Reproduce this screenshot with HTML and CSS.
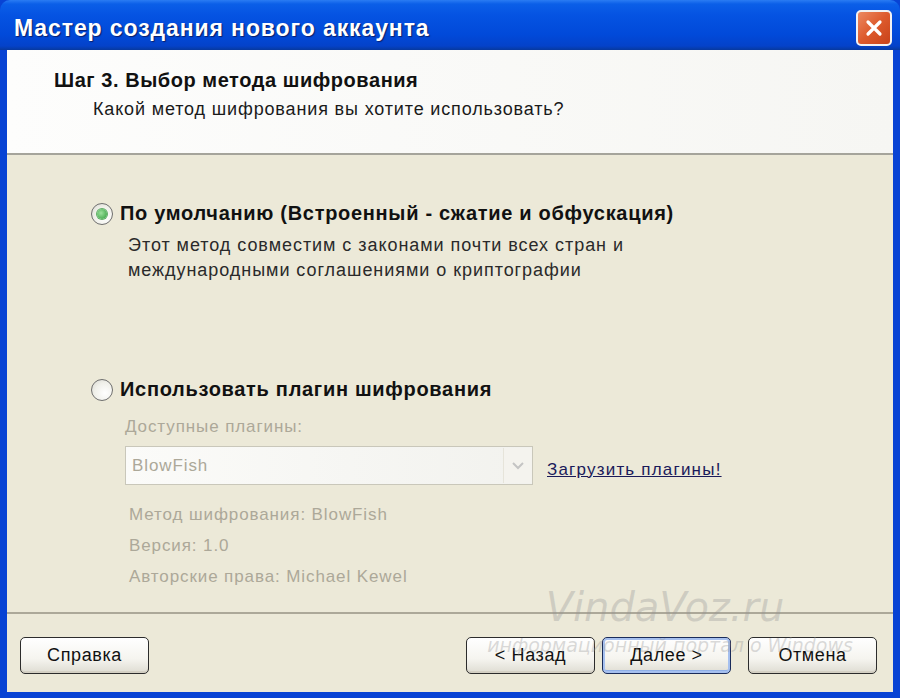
FILE: index.html
```html
<!DOCTYPE html>
<html lang="ru">
<head>
    <meta charset="UTF-8">
    <meta name="viewport" content="width=device-width, initial-scale=1.0">
    <link rel="stylesheet" href="styles.css">
    <title>Мастер создания нового аккаунта</title>
</head>
<body>
    <div class="window">
        <div class="titlebar">
            <span class="title">Мастер создания нового аккаунта</span>
            <button class="close-btn" aria-label="Закрыть">
                <svg width="22" height="22" viewBox="0 0 22 22">
                    <path d="M5 5 L17 17 M17 5 L5 17" stroke="#fff" stroke-width="3.2" stroke-linecap="round"/>
                </svg>
            </button>
        </div>

        <div class="frame">
            <!-- Step header -->
            <div class="header">
                <div class="step-title">Шаг 3. Выбор метода шифрования</div>
                <div class="step-subtitle">Какой метод шифрования вы хотите использовать?</div>
            </div>

            <div class="body">
                <label class="option">
                    <span class="radio checked"><span class="dot"></span></span>
                    <span class="option-label">По умолчанию (Встроенный - сжатие и обфускация)</span>
                </label>
                <div class="option-desc">
                    Этот метод совместим с законами почти всех стран и<br>
                    международными соглашениями о криптографии
                </div>

                <label class="option option-plugin">
                    <span class="radio"></span>
                    <span class="option-label">Использовать плагин шифрования</span>
                </label>

                <div class="plugin-box">
                    <div class="muted">Доступные плагины:</div>
                    <div class="combo-row">
                        <div class="combo">
                            <span class="combo-value">BlowFish</span>
                            <span class="combo-arrow">
                                <svg width="14" height="10" viewBox="0 0 14 10">
                                    <path d="M2 2 L7 7 L12 2" fill="none" stroke="#c4c4c4" stroke-width="2"/>
                                </svg>
                            </span>
                        </div>
                        <a class="link" href="#">Загрузить плагины!</a>
                    </div>
                    <div class="plugin-info">
                        <div class="muted">Метод шифрования: BlowFish</div>
                        <div class="muted">Версия: 1.0</div>
                        <div class="muted">Авторские права: Michael Kewel</div>
                    </div>
                </div>
            </div>

            <div class="footer">
                <button class="btn">Справка</button>
                <div class="nav-buttons">
                    <button class="btn">&lt; Назад</button>
                    <button class="btn btn-default">Далее &gt;</button>
                    <button class="btn btn-cancel">Отмена</button>
                </div>
            </div>
        </div>

        <!-- watermark of the source picture -->
        <div class="watermark">
            <span class="wm-site">VindaVoz.ru</span>
            <span class="wm-text">информационный портал о Windows</span>
        </div>
    </div>
</body>
</html>
```

FILE: styles.css
```css
body {
    margin: 0;
    padding: 0;
    font-family: "Liberation Sans", Arial, sans-serif;
    background-color: #0a49d8;
}

.window {
    position: relative;
    width: 900px;
    height: 698px;
    display: flex;
    flex-direction: column;
    background-color: #0843d4;
    overflow: hidden;
}

/* Title bar */
.titlebar {
    height: 50px;
    flex-shrink: 0;
    display: flex;
    align-items: center;
    justify-content: space-between;
    padding: 0 8px 0 14px;
    background: linear-gradient(to bottom, #2a7cf3 0%, #0b5fe8 8%, #0553e2 30%, #0149d9 70%, #0442c9 92%, #07399f 100%);
    border-radius: 10px 10px 0 0;
}

.title {
    color: #fff;
    font-weight: bold;
    font-size: 23px;
    letter-spacing: 0.9px;
    text-shadow: 1px 1px 1px #0a1f6b;
    margin-top: 6px;
}

.close-btn {
    width: 36px;
    height: 36px;
    margin-top: 6px;
    padding: 0;
    display: flex;
    align-items: center;
    justify-content: center;
    border: 2px solid #f2f2f2;
    border-radius: 5px;
    background: linear-gradient(135deg, #ec8a62 0%, #dd5a2c 50%, #c8421a 100%);
    cursor: pointer;
}

/* Dialog frame with blue side borders */
.frame {
    flex: 1;
    display: flex;
    flex-direction: column;
    margin: 0 7px 6px 7px;
    background-color: #ece9d8;
}

.header {
    height: 105px;
    flex-shrink: 0;
    padding: 19px 0 0 47px;
    box-sizing: border-box;
    background: linear-gradient(to right, #fdfdfc, #f6f6f3);
    border-bottom: 2px solid #a5a49b;
}

.step-title {
    font-weight: bold;
    font-size: 20px;
    color: #111;
    letter-spacing: 0.55px;
}

.step-subtitle {
    font-size: 18px;
    color: #1a1a1a;
    letter-spacing: 0.85px;
    margin: 7px 0 0 39px;
}

.body {
    flex: 1;
    padding: 47px 0 0 84px;
    color: #222;
}

.option {
    display: flex;
    align-items: center;
    gap: 7px;
}

.option-plugin {
    margin-top: 95px;
}

.option-label {
    font-weight: bold;
    font-size: 20px;
    color: #111;
    letter-spacing: 0.7px;
}

/* XP radio */
.radio {
    width: 20px;
    height: 20px;
    border: 1px solid #6f6f6f;
    border-radius: 50%;
    background: radial-gradient(circle at 65% 65%, #ffffff 0%, #f0f0ea 55%, #d6d6ce 100%);
    display: flex;
    align-items: center;
    justify-content: center;
    flex-shrink: 0;
}

.dot {
    width: 10px;
    height: 10px;
    border-radius: 50%;
    background: radial-gradient(circle at 40% 40%, #9de19d, #2d9b3a);
    box-shadow: 0 0 0 1px #5fae66;
}

.option-desc {
    margin: 8px 0 0 37px;
    font-size: 18px;
    line-height: 25px;
    letter-spacing: 0.95px;
    color: #2a2a2a;
}

.plugin-box {
    margin: 16px 0 0 34px;
}

.muted {
    font-size: 17px;
    letter-spacing: 0.9px;
    color: #aca899;
}

.combo-row {
    display: flex;
    align-items: center;
    margin-top: 9px;
    gap: 14px;
}

.combo {
    width: 406px;
    height: 37px;
    display: flex;
    align-items: center;
    justify-content: space-between;
    border: 1px solid #c9c7ba;
    background: linear-gradient(to right, #fbfbf9, #f2f2ee);
}

.combo-value {
    font-size: 17px;
    letter-spacing: 0.9px;
    color: #aca899;
    padding-left: 6px;
}

.combo-arrow {
    width: 28px;
    height: 35px;
    display: flex;
    align-items: center;
    justify-content: center;
    border-left: 1px solid #e6e4da;
    background-color: #f4f3ee;
}

.link {
    font-size: 17px;
    letter-spacing: 1.2px;
    color: #1a1a5a;
    text-decoration: underline;
    margin-top: 8px;
}

.plugin-info {
    margin: 20px 0 0 4px;
    display: flex;
    flex-direction: column;
    gap: 11px;
}

/* Footer with buttons */
.footer {
    height: 80px;
    flex-shrink: 0;
    box-sizing: border-box;
    border-top: 2px solid #aca899;
    display: flex;
    justify-content: space-between;
    align-items: flex-start;
    padding: 23px 16px 0 13px;
}

.nav-buttons {
    display: flex;
    gap: 7px;
}

.btn {
    width: 129px;
    height: 37px;
    font-family: "Liberation Sans", Arial, sans-serif;
    font-size: 18px;
    letter-spacing: 0.6px;
    color: #111;
    border: 1px solid #2c2c2c;
    border-radius: 5px;
    background: linear-gradient(to bottom, #ffffff 0%, #f5f4ef 60%, #dedcd2 100%);
    box-shadow: inset 0 -2px 0 #d4d0c4;
    cursor: pointer;
}

.btn-default {
    border-color: #1a2c5a;
    box-shadow: inset 0 0 0 2px #a6c0ef, inset 0 -3px 0 #8fb0e8;
}

.btn-cancel {
    margin-left: 10px;
}

/* Watermark overlay */
.watermark {
    position: absolute;
    left: 470px;
    top: 584px;
    width: 400px;
    pointer-events: none;
    display: flex;
    flex-direction: column;
    align-items: center;
    color: rgba(150, 150, 150, 0.35);
    font-family: "DejaVu Sans", sans-serif;
    font-style: italic;
    white-space: nowrap;
}

.wm-site {
    font-size: 40px;
    font-weight: 300;
    margin-left: -10px;
}

.wm-text {
    font-size: 19px;
    margin-top: 4px;
}
```
